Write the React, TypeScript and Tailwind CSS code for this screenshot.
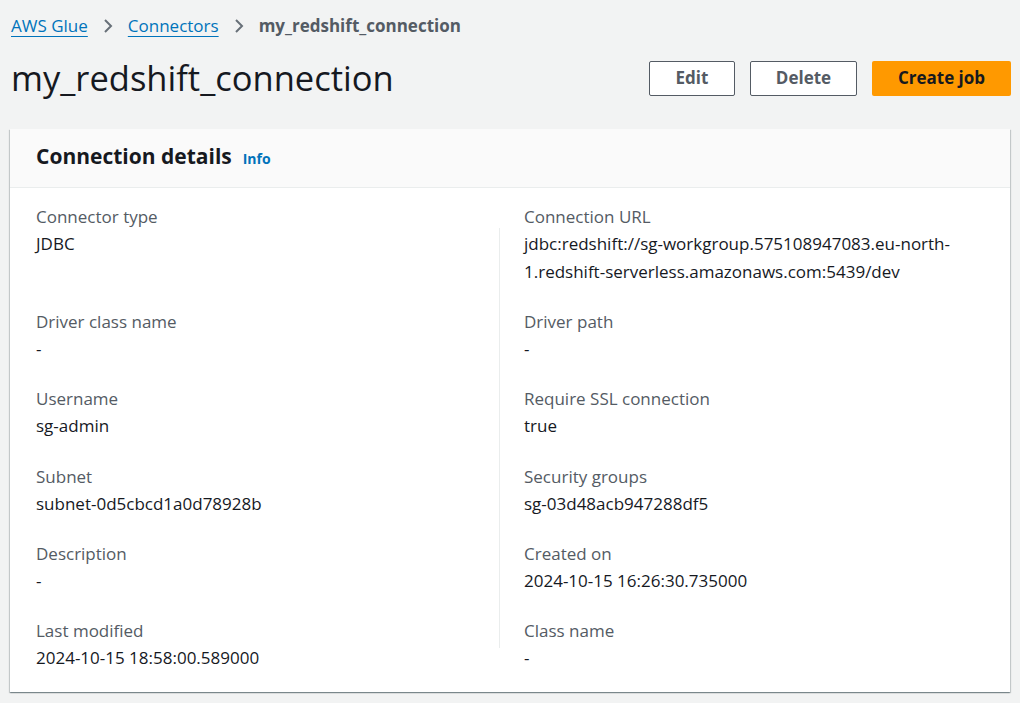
import React from "react";

const font = { fontFamily: '"Open Sans", "Liberation Sans", sans-serif' };

type Field = { label: string; value: string };

const leftFields: Field[] = [
  { label: "Connector type", value: "JDBC" },
  { label: "Driver class name", value: "-" },
  { label: "Username", value: "sg-admin" },
  { label: "Subnet", value: "subnet-0d5cbcd1a0d78928b" },
  { label: "Description", value: "-" },
  { label: "Last modified", value: "2024-10-15 18:58:00.589000" },
];

const rightFields: Field[] = [
  {
    label: "Connection URL",
    value:
      "jdbc:redshift://sg-workgroup.575108947083.eu-north-1.redshift-serverless.amazonaws.com:5439/dev",
  },
  { label: "Driver path", value: "-" },
  { label: "Require SSL connection", value: "true" },
  { label: "Security groups", value: "sg-03d48acb947288df5" },
  { label: "Created on", value: "2024-10-15 16:26:30.735000" },
  { label: "Class name", value: "-" },
];

const Chevron = () => (
  <svg width="16" height="16" viewBox="0 0 16 16" className="mx-[12px]">
    <path d="M5 2l6 6-6 6" fill="none" stroke="#687078" strokeWidth="2" />
  </svg>
);

const FieldBlock = ({ f, h }: { f: Field; h: string }) => (
  <div className={h}>
    <div className="text-[17px] leading-[26px] text-[#545b64]">{f.label}</div>
    <div className="text-[17px] leading-[28px] text-[#16191f] break-words">
      {f.value}
    </div>
  </div>
);

const heights = ["h-[105px]", "h-[77px]", "h-[78px]", "h-[77px]", "h-[77px]", "h-[70px]"];

export default function App() {
  return (
    <div className="min-h-[703px] w-[1020px] bg-[#f2f3f3]" style={font}>
      <div className="px-[11px] pt-[14px]">
        <nav className="flex items-center h-[24px] text-[17px]">
          <a className="text-[#0073bb] underline underline-offset-[4px]">AWS Glue</a>
          <Chevron />
          <a className="text-[#0073bb] underline underline-offset-[4px]">Connectors</a>
          <Chevron />
          <span className="font-bold text-[#545b64]">my_redshift_connection</span>
        </nav>
        <div className="flex items-center justify-between mt-[20px] mr-[-2px]">
          <h1 className="text-[34.5px] leading-[40px] text-[#16191f] font-normal">
            my_redshift_connection
          </h1>
          <div className="flex gap-[15px]">
            <button className="h-[35px] w-[86px] border border-[#545b64] rounded-[2px] bg-white text-[#545b64] font-bold text-[17px]">
              Edit
            </button>
            <button className="h-[35px] w-[107px] border border-[#545b64] rounded-[2px] bg-white text-[#545b64] font-bold text-[17px]">
              Delete
            </button>
            <button className="h-[35px] w-[139px] rounded-[2px] bg-[#ff9900] text-[#16191f] font-bold text-[17px]">
              Create job
            </button>
          </div>
        </div>
      </div>

      <div className="mx-[10px] mt-[31px] w-[1000px] bg-white shadow-[0_1px_1px_0_rgba(0,28,36,0.3),1px_1px_1px_0_rgba(0,28,36,0.15),-1px_1px_1px_0_rgba(0,28,36,0.15)]">
        <div className="h-[59px] bg-[#fafafa] border-b border-[#eaeded] flex items-center px-[26px] pb-[3px]">
          <h2 className="text-[21px] font-bold text-[#16191f]">Connection details</h2>
          <span className="ml-[11px] mt-[3px] text-[14px] font-bold text-[#0073bb]">Info</span>
        </div>
        <div className="flex pt-[16px] pb-[4px]">
          <div className="w-[489px] pl-[26px]">
            {leftFields.map((f, i) => (
              <FieldBlock key={f.label} f={f} h={heights[i]} />
            ))}
          </div>
          <div className="flex-1 relative pl-[25px] pr-[40px]">
            <div className="absolute left-0 top-[24px] bottom-[40px] w-px bg-[#eaeded]" />
            {rightFields.map((f, i) => (
              <FieldBlock key={f.label} f={f} h={heights[i]} />
            ))}
          </div>
        </div>
      </div>
    </div>
  );
}
